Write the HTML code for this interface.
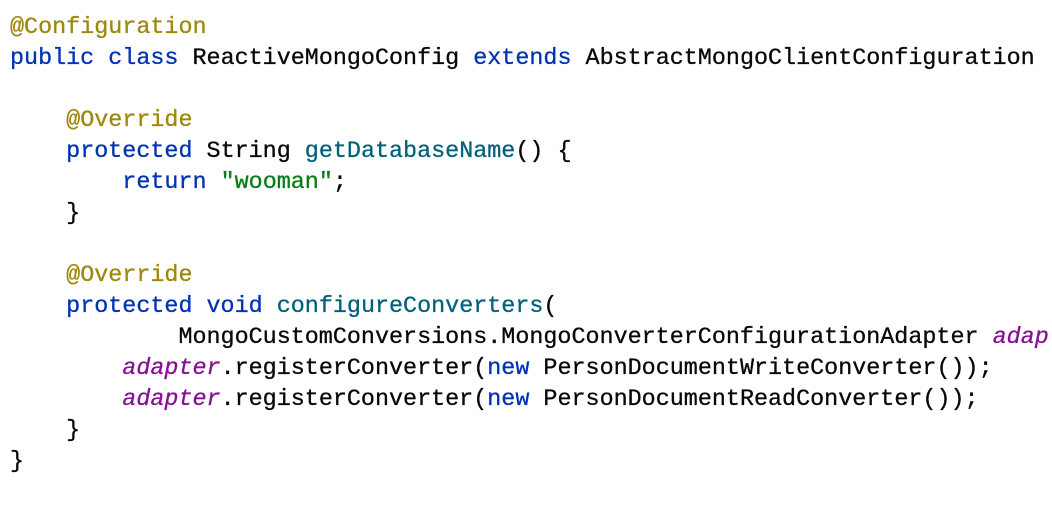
<html><head><style>
body{margin:0;background:#fff;width:1052px;height:512px;overflow:hidden;position:relative}
pre{margin:0;position:absolute;left:10px;top:13px;font-family:"Liberation Mono",monospace;font-size:23.4px;line-height:31px;color:#080808;-webkit-text-stroke:0.3px currentColor}
.a{color:#9E880D}.k{color:#0033B3}.m{color:#00627A}.s{color:#067D17}.p{color:#871094;font-style:italic}
</style></head><body><pre><span class="a">@Configuration</span>
<span class="k">public class</span> ReactiveMongoConfig <span class="k">extends</span> AbstractMongoClientConfiguration

    <span class="a">@Override</span>
    <span class="k">protected</span> String <span class="m">getDatabaseName</span>() {
        <span class="k">return</span> <span class="s">"wooman"</span>;
    }

    <span class="a">@Override</span>
    <span class="k">protected void</span> <span class="m">configureConverters</span>(
            MongoCustomConversions.MongoConverterConfigurationAdapter <span class="p">adap</span>
        <span class="p">adapter</span>.registerConverter(<span class="k">new</span> PersonDocumentWriteConverter());
        <span class="p">adapter</span>.registerConverter(<span class="k">new</span> PersonDocumentReadConverter());
    }
}</pre></body></html>
